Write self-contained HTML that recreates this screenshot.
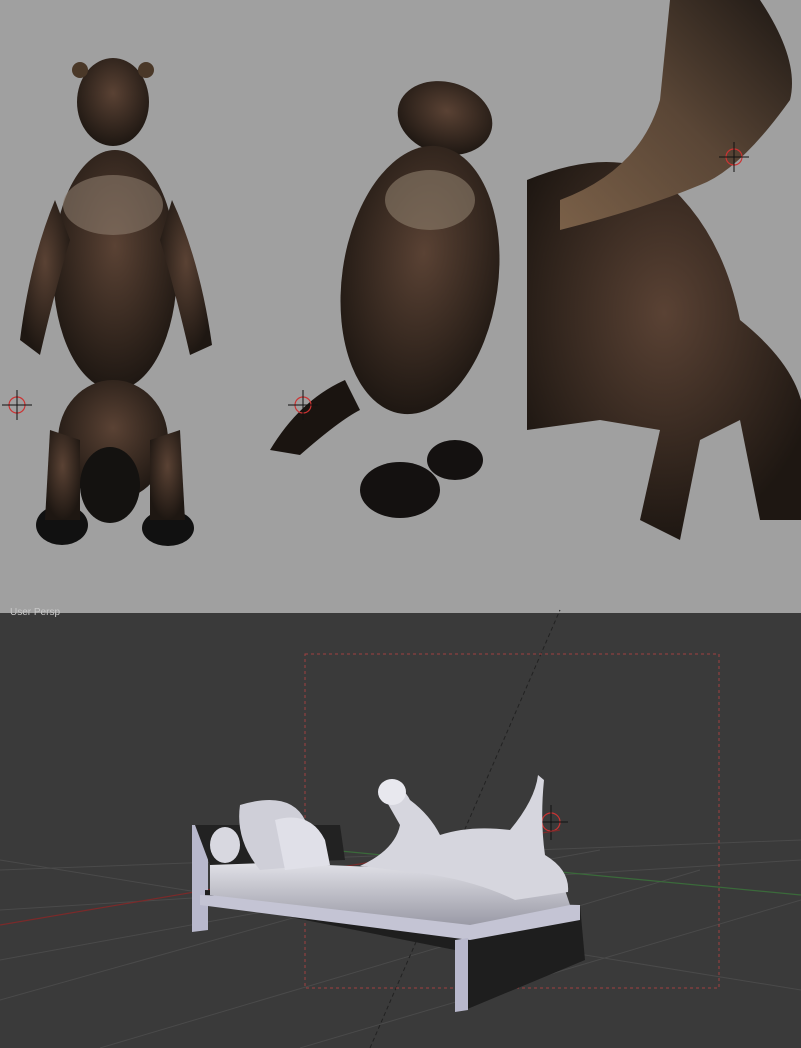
<!DOCTYPE html>
<html><head><style>
html,body{margin:0;padding:0;width:801px;height:1048px;overflow:hidden;background:#3a3a3a}
svg{display:block}
text{font-family:"Liberation Sans",sans-serif}
</style></head><body>
<svg width="801" height="1048" viewBox="0 0 801 1048" xmlns="http://www.w3.org/2000/svg">
<defs>
<radialGradient id="fur" cx="50%" cy="40%" r="60%"><stop offset="0" stop-color="#5a4234"/><stop offset="1" stop-color="#1e1712"/></radialGradient>
<linearGradient id="tail" x1="0" y1="1" x2="1" y2="0"><stop offset="0" stop-color="#7a6048"/><stop offset="0.5" stop-color="#5a4636"/><stop offset="1" stop-color="#1e1814"/></linearGradient>
<linearGradient id="sofa" x1="0" y1="0" x2="0" y2="1"><stop offset="0" stop-color="#e4e4ea"/><stop offset="1" stop-color="#9a9aa6"/></linearGradient>
</defs>
<rect x="0" y="0" width="801" height="613" fill="#a0a0a0"/>
<rect x="0" y="613" width="801" height="435" fill="#3a3a3a"/>
<text x="10" y="615" fill="#c8c8c8" font-size="10">User Persp</text>

<!-- animal 1 -->
<g fill="url(#fur)">
<ellipse cx="113" cy="102" rx="36" ry="44"/>
<ellipse cx="115" cy="270" rx="62" ry="120"/>
<ellipse cx="113" cy="440" rx="55" ry="60"/>
<path d="M55 200 Q30 260 20 340 L40 355 Q55 290 70 240Z"/>
<path d="M172 200 Q200 260 212 345 L190 355 Q175 290 160 240Z"/>
<ellipse cx="62" cy="525" rx="26" ry="20" fill="#111"/>
<ellipse cx="168" cy="528" rx="26" ry="18" fill="#111"/>
<ellipse cx="110" cy="485" rx="30" ry="38" fill="#141210"/>
<path d="M50 430 L45 520 L80 520 L80 440Z"/>
<path d="M180 430 L185 520 L150 520 L150 440Z"/>
</g>
<ellipse cx="113" cy="205" rx="50" ry="30" fill="#8c7c6c" opacity="0.6"/>
<circle cx="80" cy="70" r="8" fill="#4a3828"/><circle cx="146" cy="70" r="8" fill="#4a3828"/>

<!-- animal 2 -->
<g fill="url(#fur)">
<ellipse cx="445" cy="118" rx="48" ry="36" transform="rotate(15 445 118)"/>
<ellipse cx="420" cy="280" rx="78" ry="135" transform="rotate(8 420 280)"/>
<ellipse cx="400" cy="490" rx="40" ry="28" fill="#141110"/>
<ellipse cx="455" cy="460" rx="28" ry="20" fill="#141110"/>
<path d="M345 380 Q300 400 270 450 L300 455 Q340 420 360 410Z" fill="#1a1410"/>
</g>
<ellipse cx="430" cy="200" rx="45" ry="30" fill="#8e7e6c" opacity="0.6"/>

<!-- animal 3 -->
<g fill="url(#fur)">
<path d="M527 180 Q600 150 650 170 Q720 220 740 320 Q790 360 801 400 L801 520 L760 520 L740 420 L700 440 L680 540 L640 520 L660 430 L600 420 L527 430Z"/>
</g>
<path d="M560 200 Q640 170 660 100 L670 0 L760 0 Q800 60 790 100 Q740 170 700 185 Q640 210 560 230Z" fill="url(#tail)"/>

<!-- cursors -->
<g fill="none" stroke="#c33" stroke-width="1.2">
<circle cx="17" cy="405" r="8"/><circle cx="303" cy="405" r="8"/><circle cx="734" cy="157" r="8"/><circle cx="551" cy="822" r="9"/>
</g>
<g stroke="#111" stroke-width="1">
<path d="M17 390V420M2 405H32M303 390V420M288 405H318M734 142V172M719 157H749M551 805V840M534 822H568"/>
</g>

<!-- viewport grid -->
<g stroke="#4a4a4a" stroke-width="1">
<path d="M0 870L801 840M0 910L801 860M0 960L600 850M0 1000L500 860M100 1048L700 870M300 1048L801 900M0 860L801 990"/>
</g>
<path d="M0 925L560 830" stroke="#7a2a2a" stroke-width="1.2"/>
<path d="M330 850L801 895" stroke="#3a6a3a" stroke-width="1.2"/>
<path d="M370 1048L560 610" stroke="#222" stroke-dasharray="4 3"/>
<rect x="305" y="654" width="414" height="334" fill="none" stroke="#a04040" stroke-dasharray="3 3"/>

<!-- sofa -->
<path d="M192 825L208 825L208 930L192 932Z" fill="#b8b8cc"/>
<path d="M205 890L580 905L585 960L465 1010L455 950L205 900Z" fill="#1e1e1e"/>
<path d="M200 895L580 905L580 920L470 940L200 905Z" fill="#c4c4d4"/>
<path d="M455 940L468 938L468 1010L455 1012Z" fill="#b8b8cc"/>
<path d="M210 860L560 875L570 905L470 925L210 895Z" fill="url(#sofa)"/>
<path d="M195 825L340 825L345 860L210 865Z" fill="#222"/>
<ellipse cx="225" cy="845" rx="15" ry="18" fill="#d8d8e0"/>
<path d="M240 805Q290 790 305 820L320 865L260 870Q235 840 240 805Z" fill="#cfcfd8"/>
<path d="M275 820Q310 810 325 840L330 865L285 870Z" fill="#e0e0e8"/>
<!-- cat -->
<path d="M380 790Q400 780 410 800Q430 815 440 835Q470 825 510 830Q535 800 538 775L544 780Q540 820 545 855Q570 870 568 892L515 900Q470 878 410 872L360 866Q395 850 400 825Z" fill="#d6d6de"/>
<ellipse cx="392" cy="792" rx="14" ry="13" fill="#e8e8ee"/>
</svg>
</body></html>
